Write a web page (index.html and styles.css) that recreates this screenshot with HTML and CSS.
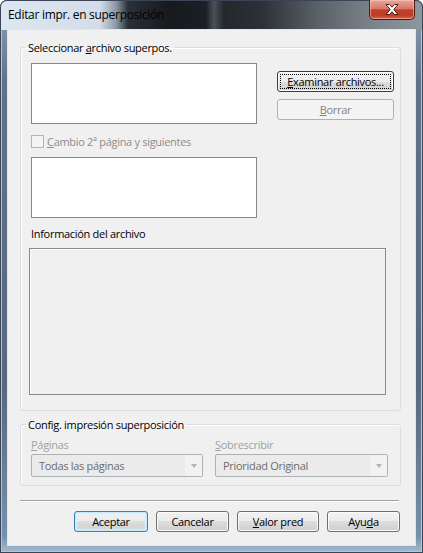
FILE: index.html
```html
<!DOCTYPE html>
<html lang="es">
<head>
    <meta charset="UTF-8">
    <title>Editar impr. en superposición</title>
    <link rel="stylesheet" href="styles.css">
</head>
<body>
    <div class="window">
        <div class="titlebar">
            <span class="title">Editar impr. en superposición</span>
            <span class="close-btn">
                <svg width="14" height="11" viewBox="0 0 14 11">
                    <polygon points="1,0.5 4.5,0.5 7,3.2 9.5,0.5 13,0.5 8.8,5.5 13,10.5 9.5,10.5 7,7.8 4.5,10.5 1,10.5 5.2,5.5" fill="#fff" stroke="#4a1c12" stroke-width="1" stroke-linejoin="round"/>
                </svg>
            </span>
        </div>

        <div class="client">
            <fieldset class="group group-file">
                <legend>Seleccionar <u>a</u>rchivo superpos.</legend>
                <div class="file-row">
                    <div class="listbox"></div>
                    <div class="side-buttons">
                        <button class="btn btn-focus"><u>E</u>xaminar archivos...</button>
                        <button class="btn" disabled><u>B</u>orrar</button>
                    </div>
                </div>
                <div class="check-row">
                    <span class="check-box"></span>
                    <span class="disabled-text"><u>C</u>ambio 2ª página y siguientes</span>
                </div>
                <div class="listbox listbox-second"></div>
                <div class="info-label">Información del archivo</div>
                <div class="info-box"></div>
            </fieldset>

            <fieldset class="group group-config">
                <legend>Config. impresión superposición</legend>
                <div class="config-grid">
                    <div class="field">
                        <span class="field-label"><u>P</u>áginas</span>
                        <div class="combo">
                            <span class="combo-text">Todas las páginas</span>
                            <span class="combo-arrow"></span>
                        </div>
                    </div>
                    <div class="field">
                        <span class="field-label"><u>S</u>obrescribir</span>
                        <div class="combo">
                            <span class="combo-text">Prioridad Original</span>
                            <span class="combo-arrow"></span>
                        </div>
                    </div>
                </div>
            </fieldset>

            <div class="separator"></div>

            <div class="dialog-buttons">
                <button class="btn btn-default btn-ok">Aceptar</button>
                <button class="btn btn-cancel">Cancelar</button>
                <button class="btn btn-reset"><u>V</u>alor pred</button>
                <button class="btn btn-help">Ayu<u>d</u>a</button>
            </div>
        </div>
    </div>
</body>
</html>
```

FILE: styles.css
```css
* {
    box-sizing: border-box;
}
body {
    margin: 0;
    background: #ffffff;
    font-family: "Open Sans", "Noto Sans", sans-serif;
    font-size: 11px;
    letter-spacing: -0.3px;
    color: #000;
}
.window {
    width: 423px;
    height: 553px;
    display: flex;
    flex-direction: column;
    border-radius: 7px 7px 0 0;
    overflow: hidden;
    background: linear-gradient(to bottom, #8ea2b9 0, #5e728b 15%, #56697f 70%, #7790ab 97%, #a9bdd2 100%);
    box-shadow: inset 0 0 0 1px #3a4658, inset 0 0 0 2px #b7c4d2;
}

/* barra de titulo */
.titlebar {
    height: 30px;
    flex-shrink: 0;
    display: flex;
    justify-content: space-between;
    align-items: flex-start;
    padding-left: 8px;
    padding-right: 8px;
    border-radius: 7px 7px 0 0;
    background: linear-gradient(to right, #dde7f1 0, #d2dde9 100px, #8c98a5 116px, #2a3038 128px, #16191d 170px, #1c2026 206px, #4b5158 214px, #24282d 224px, #2c3137 262px, #5b6269 320px, #7a8289 370px, #8f979e 423px);
    box-shadow: inset 0 1px 0 #3a4658, inset 1px 0 0 #3a4658, inset -1px 0 0 #3a4658;
}
.title {
    font-size: 12px;
    line-height: 30px;
    letter-spacing: -0.3px;
}
.close-btn {
    width: 46px;
    height: 20px;
    display: flex;
    justify-content: center;
    align-items: center;
    border: 1px solid #4b1a12;
    border-top: none;
    border-radius: 0 0 5px 5px;
    background: linear-gradient(to bottom, #e8a597 0, #d7796a 45%, #c2402b 52%, #bf3a25 80%, #d8664c 100%);
    box-shadow: inset 0 0 0 1px rgba(255, 210, 200, 0.5);
}

.client {
    flex: 1;
    margin: 0 8px 8px 8px;
    padding: 10px 14px 0 12px;
    background: #f0f0f0;
    box-shadow: 0 0 0 1px #dfe6ee;
}

/* group box */
.group {
    margin: 0;
    min-width: 0;
    border: 1px solid #d5dfe5;
    border-radius: 3px;
    box-shadow: inset 1px 1px 0 #fff;
}
.group legend {
    margin-left: -5px;
    padding: 0 2px;
    line-height: 15px;
}
.group-file {
    padding: 8px 5px 15px 10px;
}
.file-row {
    display: flex;
}
.listbox {
    flex-shrink: 0;
    width: 226px;
    height: 61px;
    background: #fff;
    border: 1px solid #828790;
}
.side-buttons {
    margin-left: 20px;
    padding-top: 8px;
    display: flex;
    flex-direction: column;
    gap: 7px;
}
.side-buttons .btn {
    width: 117px;
}

.check-row {
    margin-top: 11px;
    height: 13px;
    display: flex;
    align-items: center;
    gap: 3px;
}
.check-box {
    width: 13px;
    height: 13px;
    border: 1px solid #b4b4b4;
    background: #f4f4f4;
}
.disabled-text {
    line-height: 13px;
    color: #8d8d8d;
}
.listbox-second {
    margin-top: 9px;
}
.info-label {
    margin-top: 8px;
    line-height: 15px;
}
.info-box {
    margin-top: 7px;
    margin-left: -2px;
    width: 357px;
    height: 147px;
    background: #f0f0f0;
    border: 1px solid #8a8a8a;
    box-shadow: inset 1px 1px 0 #fff;
}

.group-config {
    margin-top: 6px;
    padding: 5px 10px 8px 10px;
}
.config-grid {
    display: grid;
    grid-template-columns: 172px 173px;
    column-gap: 12px;
}
.field-label {
    display: block;
    line-height: 15px;
    color: #a0a0a0;
}
.combo {
    margin-top: 2px;
    height: 23px;
    display: flex;
    align-items: center;
    border: 1px solid #adb2b5;
    border-radius: 2px;
    background: #ebebeb;
}
.combo-text {
    flex: 1;
    padding-left: 7px;
    color: #6d6d6d;
}
.combo-arrow {
    width: 17px;
    height: 21px;
    background: #f2f2f2;
    display: flex;
    justify-content: center;
    align-items: center;
}
.combo-arrow::after {
    content: "";
    border-left: 3.5px solid transparent;
    border-right: 3.5px solid transparent;
    border-top: 4px solid #b4b4b4;
}

.separator {
    margin-top: 14px;
    width: 379px;
    height: 2px;
    border-top: 1px solid #a0a0a0;
    border-bottom: 1px solid #ffffff;
}

/* botones */
.btn {
    height: 21px;
    padding: 0;
    font: inherit;
    letter-spacing: -0.3px;
    color: #000;
    border: 1px solid #707070;
    border-radius: 3px;
    background: linear-gradient(to bottom, #f2f2f2 0, #ebebeb 50%, #dddddd 50%, #cfcfcf 100%);
    box-shadow: inset 0 0 0 1px #fbfbfb;
}
.btn:disabled {
    color: #838383;
    border-color: #adb2b5;
    background: #f4f4f4;
    box-shadow: none;
}
.btn-focus {
    border-color: #3c3c3c;
    outline: 1px dotted #000;
    outline-offset: -4px;
}
.btn-default {
    border-color: #3c7fb1;
    box-shadow: inset 0 0 0 1px #c8e9f9, inset 0 0 2px 2px #d8f0fb;
}
.dialog-buttons {
    margin-top: 9px;
    display: flex;
    justify-content: flex-end;
    gap: 8px;
    width: 380px;
}
.btn-ok {
    width: 74px;
}
.btn-cancel {
    width: 73px;
}
.btn-reset {
    width: 82px;
}
.btn-help {
    width: 73px;
}
```
